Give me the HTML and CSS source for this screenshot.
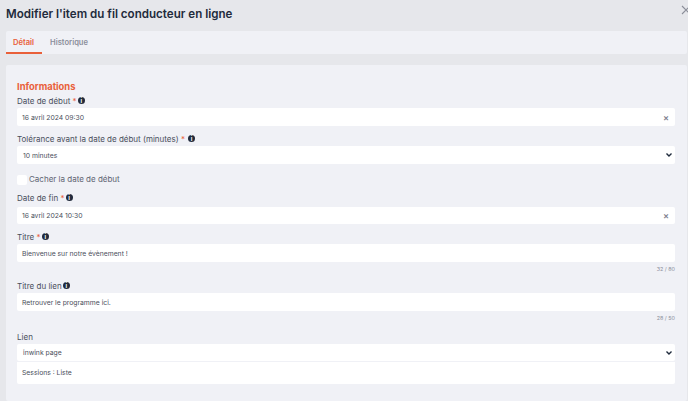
FILE: index.html
```html
<!DOCTYPE html>
<html lang="fr">
<head>
  <meta charset="UTF-8">
  <meta name="viewport" content="width=device-width, initial-scale=1.0">
  <title>Modifier l'item du fil conducteur en ligne</title>
  <link rel="stylesheet" href="styles.css">
</head>
<body>
  <div class="panneau">
    <div class="entete">
      <h1 class="titre">Modifier l'item du fil conducteur en ligne</h1>
      <svg class="fermer" width="10" height="10" viewBox="0 0 10 10"><path d="M1 1l8 8M9 1l-8 8" stroke="#8b8e99" stroke-width="1.1" fill="none"/></svg>
    </div>

    <div class="onglets">
      <div class="onglet actif">Détail</div>
      <div class="onglet">Historique</div>
    </div>

    <div class="carte">
      <h2 class="section">Informations</h2>

      <div class="champ">
        <div class="libelle">Date de début <span class="requis">*</span> <span class="info">i</span></div>
        <div class="saisie"><span>16 avril 2024 09:30</span><span class="effacer">×</span></div>
      </div>

      <div class="champ champ-tolerance">
        <div class="libelle">Tolérance avant la date de début (minutes) <span class="requis">*</span> <span class="info">i</span></div>
        <div class="saisie liste"><span>10 minutes</span>
          <svg class="chevron" width="8" height="6" viewBox="0 0 8 6"><path d="M1.5 1.6l2.5 2.5 2.5-2.5" stroke="#1f2a3c" stroke-width="1.4" fill="none"/></svg>
        </div>
      </div>

      <div class="case-ligne">
        <div class="case"></div>
        <div class="case-texte">Cacher la date de début</div>
      </div>

      <div class="champ champ-fin">
        <div class="libelle">Date de fin <span class="requis">*</span> <span class="info">i</span></div>
        <div class="saisie court"><span>16 avril 2024 10:30</span><span class="effacer">×</span></div>
      </div>

      <div class="champ champ-titre">
        <div class="libelle">Titre <span class="requis">*</span> <span class="info">i</span></div>
        <div class="saisie"><span>Bienvenue sur notre évènement !</span></div>
        <div class="compteur">32 / 80</div>
      </div>

      <div class="champ champ-lien-titre">
        <div class="libelle">Titre du lien <span class="info">i</span></div>
        <div class="saisie"><span>Retrouver le programme ici.</span></div>
        <div class="compteur">28 / 50</div>
      </div>

      <div class="champ champ-lien">
        <div class="libelle">Lien</div>
        <div class="saisie liste court"><span>inwink page</span>
          <svg class="chevron" width="8" height="6" viewBox="0 0 8 6"><path d="M1.5 1.6l2.5 2.5 2.5-2.5" stroke="#1f2a3c" stroke-width="1.4" fill="none"/></svg>
        </div>
        <div class="sous-saisie">Sessions : Liste</div>
      </div>
    </div>
  </div>
</body>
</html>
```

FILE: styles.css
```css
* {
  box-sizing: border-box;
}

html, body {
  height: 100%;
}

body {
  margin: 0;
  overflow: hidden;
  font-family: "Inter", "Liberation Sans", sans-serif;
  background-color: #e6e7eb;
  color: #4a4f5c;
}

.panneau {
  height: 401px;
  padding-left: 6px;
  padding-right: 1px;
}

.entete {
  height: 31px;
  display: flex;
  justify-content: space-between;
  align-items: flex-start;
}

.titre {
  margin: 7px 0 0;
  font-size: 11.6px;
  line-height: 15px;
  font-weight: 600;
  color: #222b3c;
}

.fermer {
  margin-top: 5px;
  margin-right: -4px;
}

.onglets {
  height: 23px;
  display: flex;
  gap: 1px;
  background-color: #f0f1f6;
  border-radius: 2px;
  font-size: 7.6px;
  font-weight: 600;
}

.onglet {
  padding: 7px 7px 0 7px;
  color: #8b8e9b;
}

.onglet.actif {
  width: 36px;
  color: #e9603a;
  border-bottom: 2px solid #e9603a;
}

.carte {
  margin-top: 11px;
  height: 336px;
  padding: 15px 12px 0 11px;
  background-color: #f0f1f6;
  border-radius: 2px;
}

.section {
  margin: 0;
  font-size: 9.4px;
  line-height: 13px;
  font-weight: 700;
  color: #e9603a;
}

.champ {
  margin-top: 1px;
}

.libelle {
  height: 14px;
  font-size: 8px;
  line-height: 14px;
  color: #4a4f5c;
}

.requis {
  color: #e9603a;
}

.info {
  display: inline-block;
  width: 7px;
  height: 7px;
  margin-left: -1px;
  border-radius: 50%;
  background-color: #222b3c;
  color: #fff;
  font-size: 6px;
  line-height: 7px;
  font-weight: 700;
  text-align: center;
  vertical-align: 1.5px;
}

.champ-tolerance .info {
  margin-left: 1px;
}

.saisie {
  height: 18px;
  padding: 0 6px 0 5px;
  display: flex;
  justify-content: space-between;
  align-items: center;
  background-color: #fff;
  border-radius: 2px;
  font-size: 6.8px;
  color: #4a4f5c;
}

.saisie.court {
  height: 17px;
}

.saisie.liste {
  padding-left: 6px;
  padding-right: 2px;
}

.effacer {
  color: #808390;
  font-size: 9px;
  font-weight: 600;
}

.chevron {
  display: block;
}

.champ-tolerance {
  margin-top: 6px;
}

.case-ligne {
  margin-top: 11px;
  height: 10px;
  display: flex;
  align-items: center;
  gap: 2px;
}

.case {
  width: 10px;
  height: 10px;
  background-color: #fff;
  border-radius: 2px;
}

.case-texte {
  margin-top: -2px;
  font-size: 8px;
  color: #5f6472;
}

.champ-fin {
  margin-top: 6px;
}

.champ-fin .libelle {
  height: 16px;
}

.champ-titre {
  margin-top: 6px;
}

.compteur {
  height: 10px;
  font-size: 5.4px;
  line-height: 14px;
  text-align: right;
  color: #8b8e9b;
}

.champ-lien-titre {
  margin-top: 7px;
}

.champ-lien {
  margin-top: 9px;
}

.sous-saisie {
  height: 22px;
  margin-top: 1px;
  padding-left: 5px;
  background-color: #fff;
  border-radius: 0 0 2px 2px;
  font-size: 6.8px;
  line-height: 21px;
}
```
